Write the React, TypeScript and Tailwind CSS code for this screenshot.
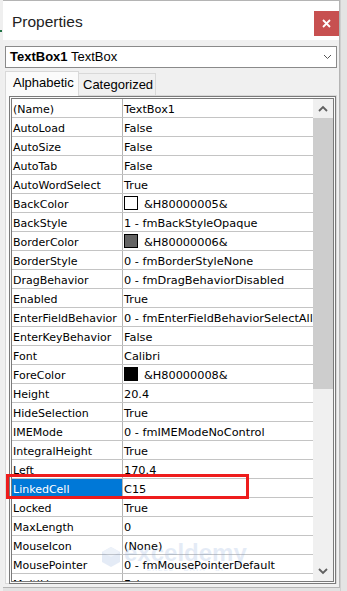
const rows: { name: string; value: string; swatch?: string }[] = [
  { name: "(Name)", value: "TextBox1" },
  { name: "AutoLoad", value: "False" },
  { name: "AutoSize", value: "False" },
  { name: "AutoTab", value: "False" },
  { name: "AutoWordSelect", value: "True" },
  { name: "BackColor", value: "&H80000005&", swatch: "bg-white" },
  { name: "BackStyle", value: "1 - fmBackStyleOpaque" },
  { name: "BorderColor", value: "&H80000006&", swatch: "bg-[#646464]" },
  { name: "BorderStyle", value: "0 - fmBorderStyleNone" },
  { name: "DragBehavior", value: "0 - fmDragBehaviorDisabled" },
  { name: "Enabled", value: "True" },
  { name: "EnterFieldBehavior", value: "0 - fmEnterFieldBehaviorSelectAll" },
  { name: "EnterKeyBehavior", value: "False" },
  { name: "Font", value: "Calibri" },
  { name: "ForeColor", value: "&H80000008&", swatch: "bg-black" },
  { name: "Height", value: "20.4" },
  { name: "HideSelection", value: "True" },
  { name: "IMEMode", value: "0 - fmIMEModeNoControl" },
  { name: "IntegralHeight", value: "True" },
  { name: "Left", value: "170.4" },
  { name: "LinkedCell", value: "C15" },
  { name: "Locked", value: "True" },
  { name: "MaxLength", value: "0" },
  { name: "MouseIcon", value: "(None)" },
  { name: "MousePointer", value: "0 - fmMousePointerDefault" },
  { name: "MultiLine", value: "False" },
];

function Chevron({ up }: { up?: boolean }) {
  return (
    <svg width="10" height="7" viewBox="0 0 10 7">
      <polyline
        points={up ? "1,6 5,2 9,6" : "1,1 5,5 9,1"}
        fill="none"
        stroke="#606060"
        strokeWidth="1.8"
      />
    </svg>
  );
}

function PropertyRow({ row }: { row: (typeof rows)[number] }) {
  const selected = row.name === "LinkedCell";
  return (
    <div className="flex h-[19px] shrink-0 border-b border-[#c4c4c4]">
      <div
        className={`w-[110px] shrink-0 overflow-hidden whitespace-nowrap pl-[1px] leading-[22px] ${
          selected ? "bg-[#0078d7] text-white" : "text-black"
        }`}
      >
        {row.name}
      </div>
      <div className="w-px shrink-0 bg-[#b4b4b4]" />
      <div className="flex w-[190px] shrink-0 items-start overflow-hidden whitespace-nowrap pl-[1px] text-[11.3px] leading-[22px] text-black">
        {row.swatch && (
          <span className={`mt-[2px] mr-[6px] h-[14px] w-[14px] shrink-0 border border-black ${row.swatch}`} />
        )}
        {row.value}
      </div>
    </div>
  );
}

export default function App() {
  return (
    <div className="flex h-[591px] w-[347px] overflow-hidden bg-[#e2e2e2] font-['DejaVu_Sans',sans-serif] text-[11px]">
      <div className="flex w-[3px] shrink-0 flex-col bg-[#efefef]">
        <div className="mt-[30px] h-[2px] w-[2px] bg-[#217346]" />
      </div>

      <div className="relative flex h-[588px] w-[337px] shrink-0 flex-col border-t border-r border-b border-[#b4b4b4] bg-[#f0f0f0]">
        {/* title bar */}
        <div className="flex h-[39px] shrink-0 items-start justify-between bg-white">
          <span className="mt-[9px] ml-[9px] font-['Liberation_Sans',sans-serif] text-[15.5px] text-[#222]">
            Properties
          </span>
          <button
            type="button"
            className="mt-[10px] flex h-[25px] w-[25px] items-center justify-center bg-[#c75050]"
          >
            <svg width="9" height="9" viewBox="0 0 9 9">
              <path d="M1 1 8 8M8 1 1 8" stroke="white" strokeWidth="1.8" />
            </svg>
          </button>
        </div>

        {/* object dropdown */}
        <div className="mx-[2px] mt-[6px] flex h-[22px] shrink-0 items-center justify-between border border-[#8a8a8a] bg-white pl-[4px] pr-[4px] font-['Liberation_Sans',sans-serif] text-[13px] text-black">
          <span>
            <b>TextBox1</b> TextBox
          </span>
          <svg width="9" height="6" viewBox="0 0 9 6">
            <polyline points="1,1 4.5,4.5 8,1" fill="none" stroke="#555" strokeWidth="1" />
          </svg>
        </div>

        {/* tabs */}
        <div className="mt-[3px] ml-[2px] flex h-[24px] shrink-0 items-end font-['Liberation_Sans',sans-serif] text-[13px] text-black">
          <div className="relative z-10 -mb-px flex h-[25px] w-[74px] items-center border-x border-t border-[#d9d9d9] bg-[#fbfbfb] pl-[7px] pb-[2px]">
            Alphabetic
          </div>
          <div className="flex h-[22px] w-[77px] items-center border-t border-r border-[#d9d9d9] bg-[#f0f0f0] pl-[4px] pt-[1px]">
            Categorized
          </div>
        </div>

        {/* tab page */}
        <div className="mx-[2px] flex h-[489px] shrink-0 flex-col border border-[#d9d9d9] bg-[#fbfbfb]">
          <div className="ml-[3px] flex h-[488px] w-[327px] border-[3px] border-double border-[#7a7a7a]">
            <div className="flex w-[301px] shrink-0 flex-col overflow-hidden bg-white">
              {rows.map((r) => (
                <PropertyRow key={r.name} row={r} />
              ))}
            </div>
            <div className="flex w-[20px] shrink-0 flex-col bg-[#f0f0f0]">
              <div className="flex h-[19px] shrink-0 items-center justify-center">
                <Chevron up />
              </div>
              <div className="h-[271px] shrink-0 bg-[#cdcdcd]" />
              <div className="flex-1" />
              <div className="flex h-[19px] shrink-0 items-center justify-center">
                <Chevron />
              </div>
            </div>
          </div>
        </div>

        {/* annotation box */}
        <div className="pointer-events-none absolute top-[473px] left-[3px] h-[25px] w-[243px] border-[3px] border-[#ee1c1c]" />

        {/* watermark */}
        <div className="pointer-events-none absolute top-[540px] left-[98px] flex items-center gap-[3px] opacity-20">
          <svg width="20" height="22" viewBox="0 0 20 22">
            <path d="M10 1 19 6v10l-9 5-9-5V6z" fill="#7d9fd6" />
            <path d="M10 1 19 6l-9 5-9-5z" fill="#a9c0e6" />
          </svg>
          <div className="flex flex-col items-center leading-none">
            <span className="font-['Liberation_Sans',sans-serif] text-[24px] font-bold text-[#7d9fd6]">
              exceldemy
            </span>
            <span className="mt-[1px] text-[7px] tracking-[1px] text-[#7d9fd6]">
              EXCEL · DATA · BI
            </span>
          </div>
        </div>
      </div>

      <div className="flex-1 border-l border-[#cfcfcf] bg-[#e4e4e4]" />
    </div>
  );
}
